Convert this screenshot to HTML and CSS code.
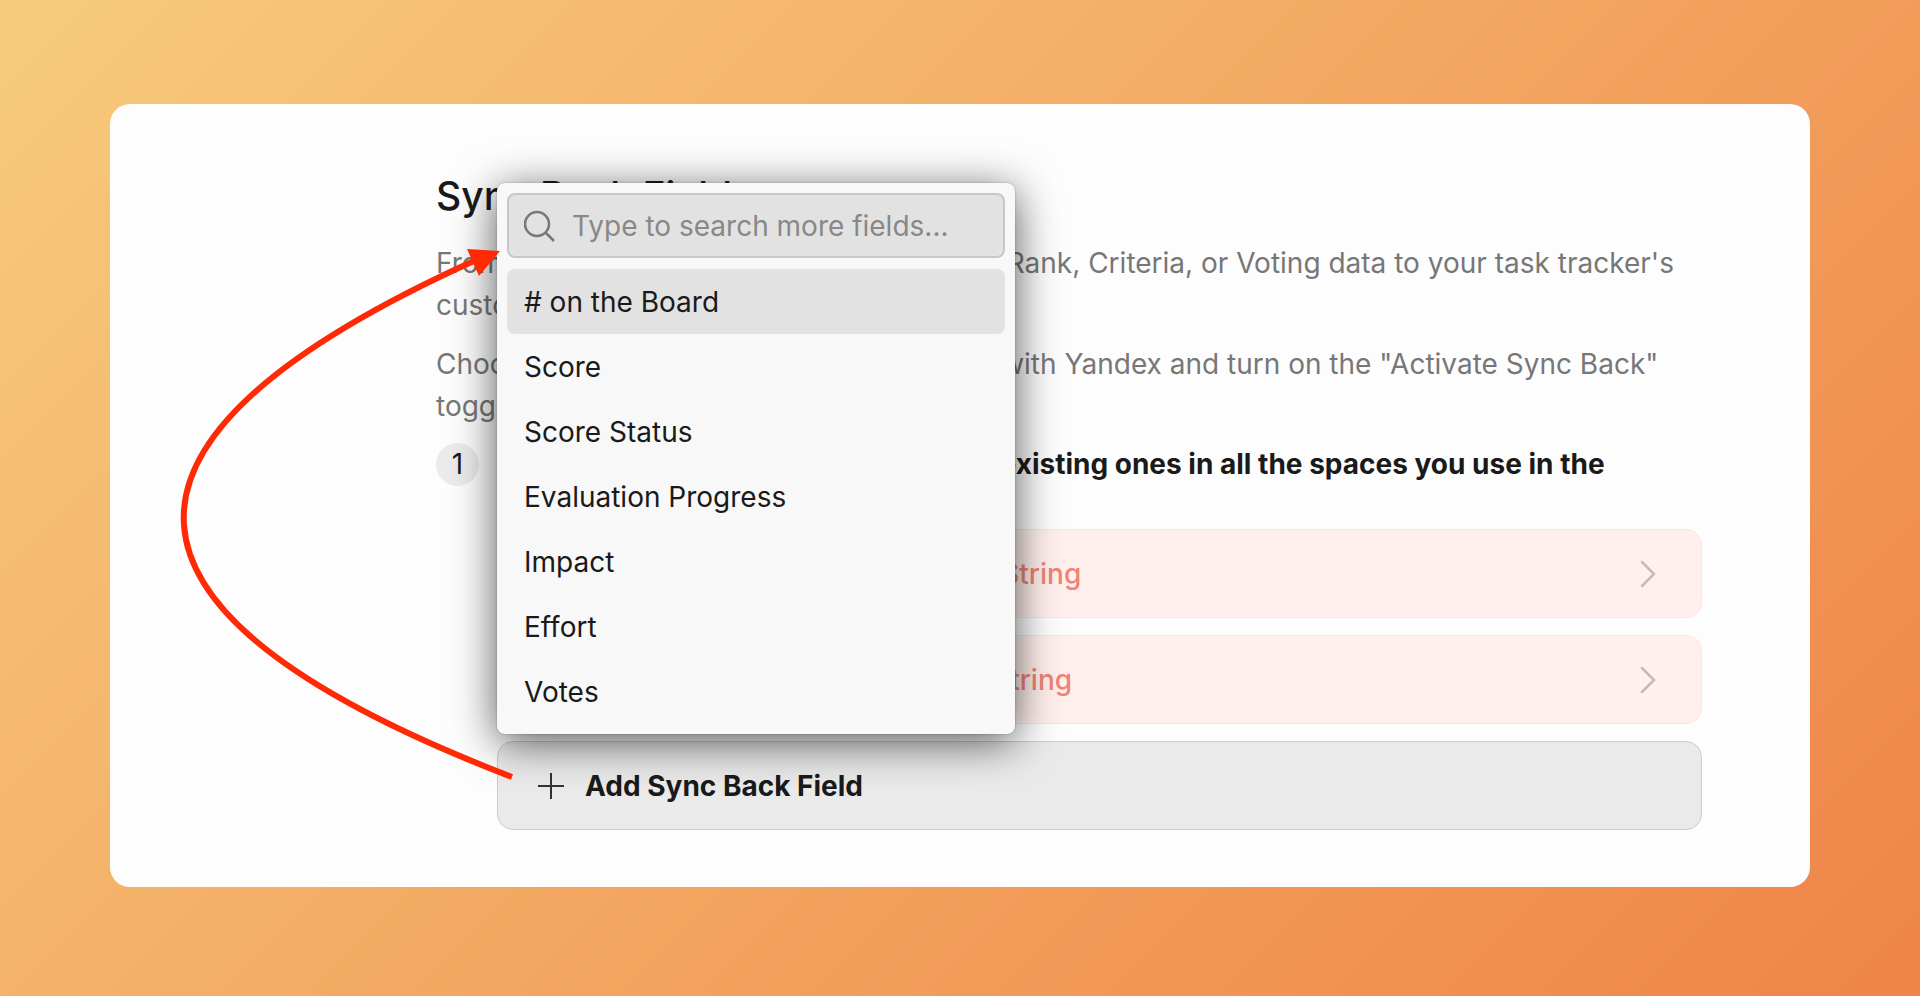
FILE: index.html
```html
<!DOCTYPE html>
<html lang="en">
<head>
<meta charset="utf-8">
<meta name="viewport" content="width=device-width, initial-scale=1">
<title>Sync Back Fields</title>
<link rel="stylesheet" href="styles.css">
</head>
<body class="page">
<main class="panel">
  <h1 class="title">Sync Back Fields</h1>
  <div class="intro">
    <p class="text">From Ducalis, you can sync out any Score, Rank, Criteria, or Voting data to your task tracker's custom fields.</p>
    <p class="text">Choose these fields you could like to sync with Yandex and turn on the "Activate Sync Back" toggle.</p>
  </div>
  <section class="step">
    <span class="step-number">1</span>
    <div class="step-body">
      <h2 class="step-title">Create new custom fields or use any existing ones in all the spaces you use in the Ducalis board.</h2>
      <div class="fields">
        <button class="field" type="button"><span>Total Score send to this field type: String</span>
          <svg class="chevron" viewBox="0 0 16 28" aria-hidden="true"><path d="M2 2l12 12L2 26"/></svg></button>
        <button class="field" type="button"><span>Top Priority sent to the field type: String</span>
          <svg class="chevron" viewBox="0 0 16 28" aria-hidden="true"><path d="M2 2l12 12L2 26"/></svg></button>
        <div class="add-wrap">
          <button class="add" type="button">
            <svg class="plus" viewBox="0 0 26 26" aria-hidden="true"><path d="M13 0v26M0 13h26"/></svg>
            <span>Add Sync Back Field</span></button>
          <div class="menu">
            <label class="search">
              <svg class="search-icon" viewBox="0 0 32 32" aria-hidden="true"><circle cx="13" cy="14" r="12"/><path d="M21 22l9 9"/></svg>
              <input class="search-input" type="text" aria-label="Search fields" placeholder="Type to search more fields...">
            </label>
            <div class="options">
              <button class="option active" type="button"># on the Board</button>
              <button class="option" type="button">Score</button>
              <button class="option" type="button">Score Status</button>
              <button class="option" type="button">Evaluation Progress</button>
              <button class="option" type="button">Impact</button>
              <button class="option" type="button">Effort</button>
              <button class="option" type="button">Votes</button>
            </div>
          </div>
        </div>
      </div>
    </div>
  </section>
  <svg class="arrow" viewBox="0 0 420 700" aria-hidden="true"><path class="arrow-line" d="M402 673Q-236 428 366 156"/><path class="arrow-head" d="M357 145L390 147L369 172Z"/></svg>
</main>
</body>
</html>
```
FILE: styles.css
```css
* { box-sizing: border-box; }
.page {
  margin: 0;
  min-height: 100vh;
  padding: 104px 110px 108px;
  background: linear-gradient(135deg, #f7cb7c, #ef8448);
  font-family: Inter, "Liberation Sans", sans-serif;
  font-size: 28px;
  line-height: 42px;
  color: #1a1a1a;
}
.panel {
  position: relative;
  padding: 68px 108px 57px 326px;
  border-radius: 20px;
  background: #fdfdfd;
}
.title {
  margin: 0 0 22px;
  font-size: 39px;
  line-height: 48px;
  font-weight: 500;
}
.intro { display: flex; flex-direction: column; gap: 17px; margin-bottom: 16px; }
.text { margin: 0; color: #777; }
.step { display: flex; gap: 18px; }
.step-number {
  flex: none;
  width: 43px;
  height: 43px;
  border-radius: 50%;
  background: #ebebeb;
  text-align: center;
}
.step-body { flex: 1; }
.step-title { margin: 0 0 2px; font-size: 28px; line-height: 42px; font-weight: 700; }
.fields { display: flex; flex-direction: column; gap: 17px; }
button { font: inherit; color: inherit; text-align: left; cursor: pointer; }
.field, .add {
  display: flex;
  align-items: center;
  width: 100%;
  height: 89px;
  border-radius: 16px;
}
.field {
  justify-content: space-between;
  padding: 0 45px 0 40px;
  border: 1px solid #ffe2dd;
  background: #fff0ed;
  color: #ef8474;
  font-weight: 500;
}
.chevron { width: 16px; height: 28px; fill: none; stroke: #c8b9b8; stroke-width: 2.5; stroke-linecap: round; }
.add-wrap { position: relative; }
.add {
  gap: 21px;
  padding: 0 40px;
  border: 1px solid #ccc;
  background: #eaeaea;
  font-weight: 700;
}
.plus { width: 26px; height: 26px; fill: none; stroke: #333; stroke-width: 2; }
.menu {
  position: absolute;
  left: 0;
  bottom: calc(100% + 7px);
  width: 518px;
  padding: 10px;
  border-radius: 8px;
  background: #f8f8f8;
  box-shadow: 0 0 2px rgba(0, 0, 0, .3), 0 8px 44px rgba(0, 0, 0, .66);
}
.search {
  display: flex;
  align-items: center;
  gap: 16px;
  height: 65px;
  margin-bottom: 11px;
  padding: 0 15px;
  border: 2px solid #c8c8c8;
  border-radius: 8px;
  background: #e2e2e2;
}
.search-icon { flex: none; width: 32px; height: 32px; fill: none; stroke: #777; stroke-width: 2.5; }
.search-input {
  flex: 1;
  min-width: 0;
  padding: 0;
  border: 0;
  outline: 0;
  background: none;
  font: inherit;
  color: inherit;
}
.search-input::placeholder { color: #888; opacity: 1; }
.options { display: flex; flex-direction: column; }
.option {
  height: 65px;
  padding: 0 17px;
  border: 0;
  border-radius: 8px;
  background: none;
}
.active { background: #e2e2e2; }
.arrow { position: absolute; left: 0; top: 0; width: 420px; height: 700px; pointer-events: none; }
.arrow-line { fill: none; stroke: #ff2a05; stroke-width: 6; }
.arrow-head { fill: #ff2a05; }
```
